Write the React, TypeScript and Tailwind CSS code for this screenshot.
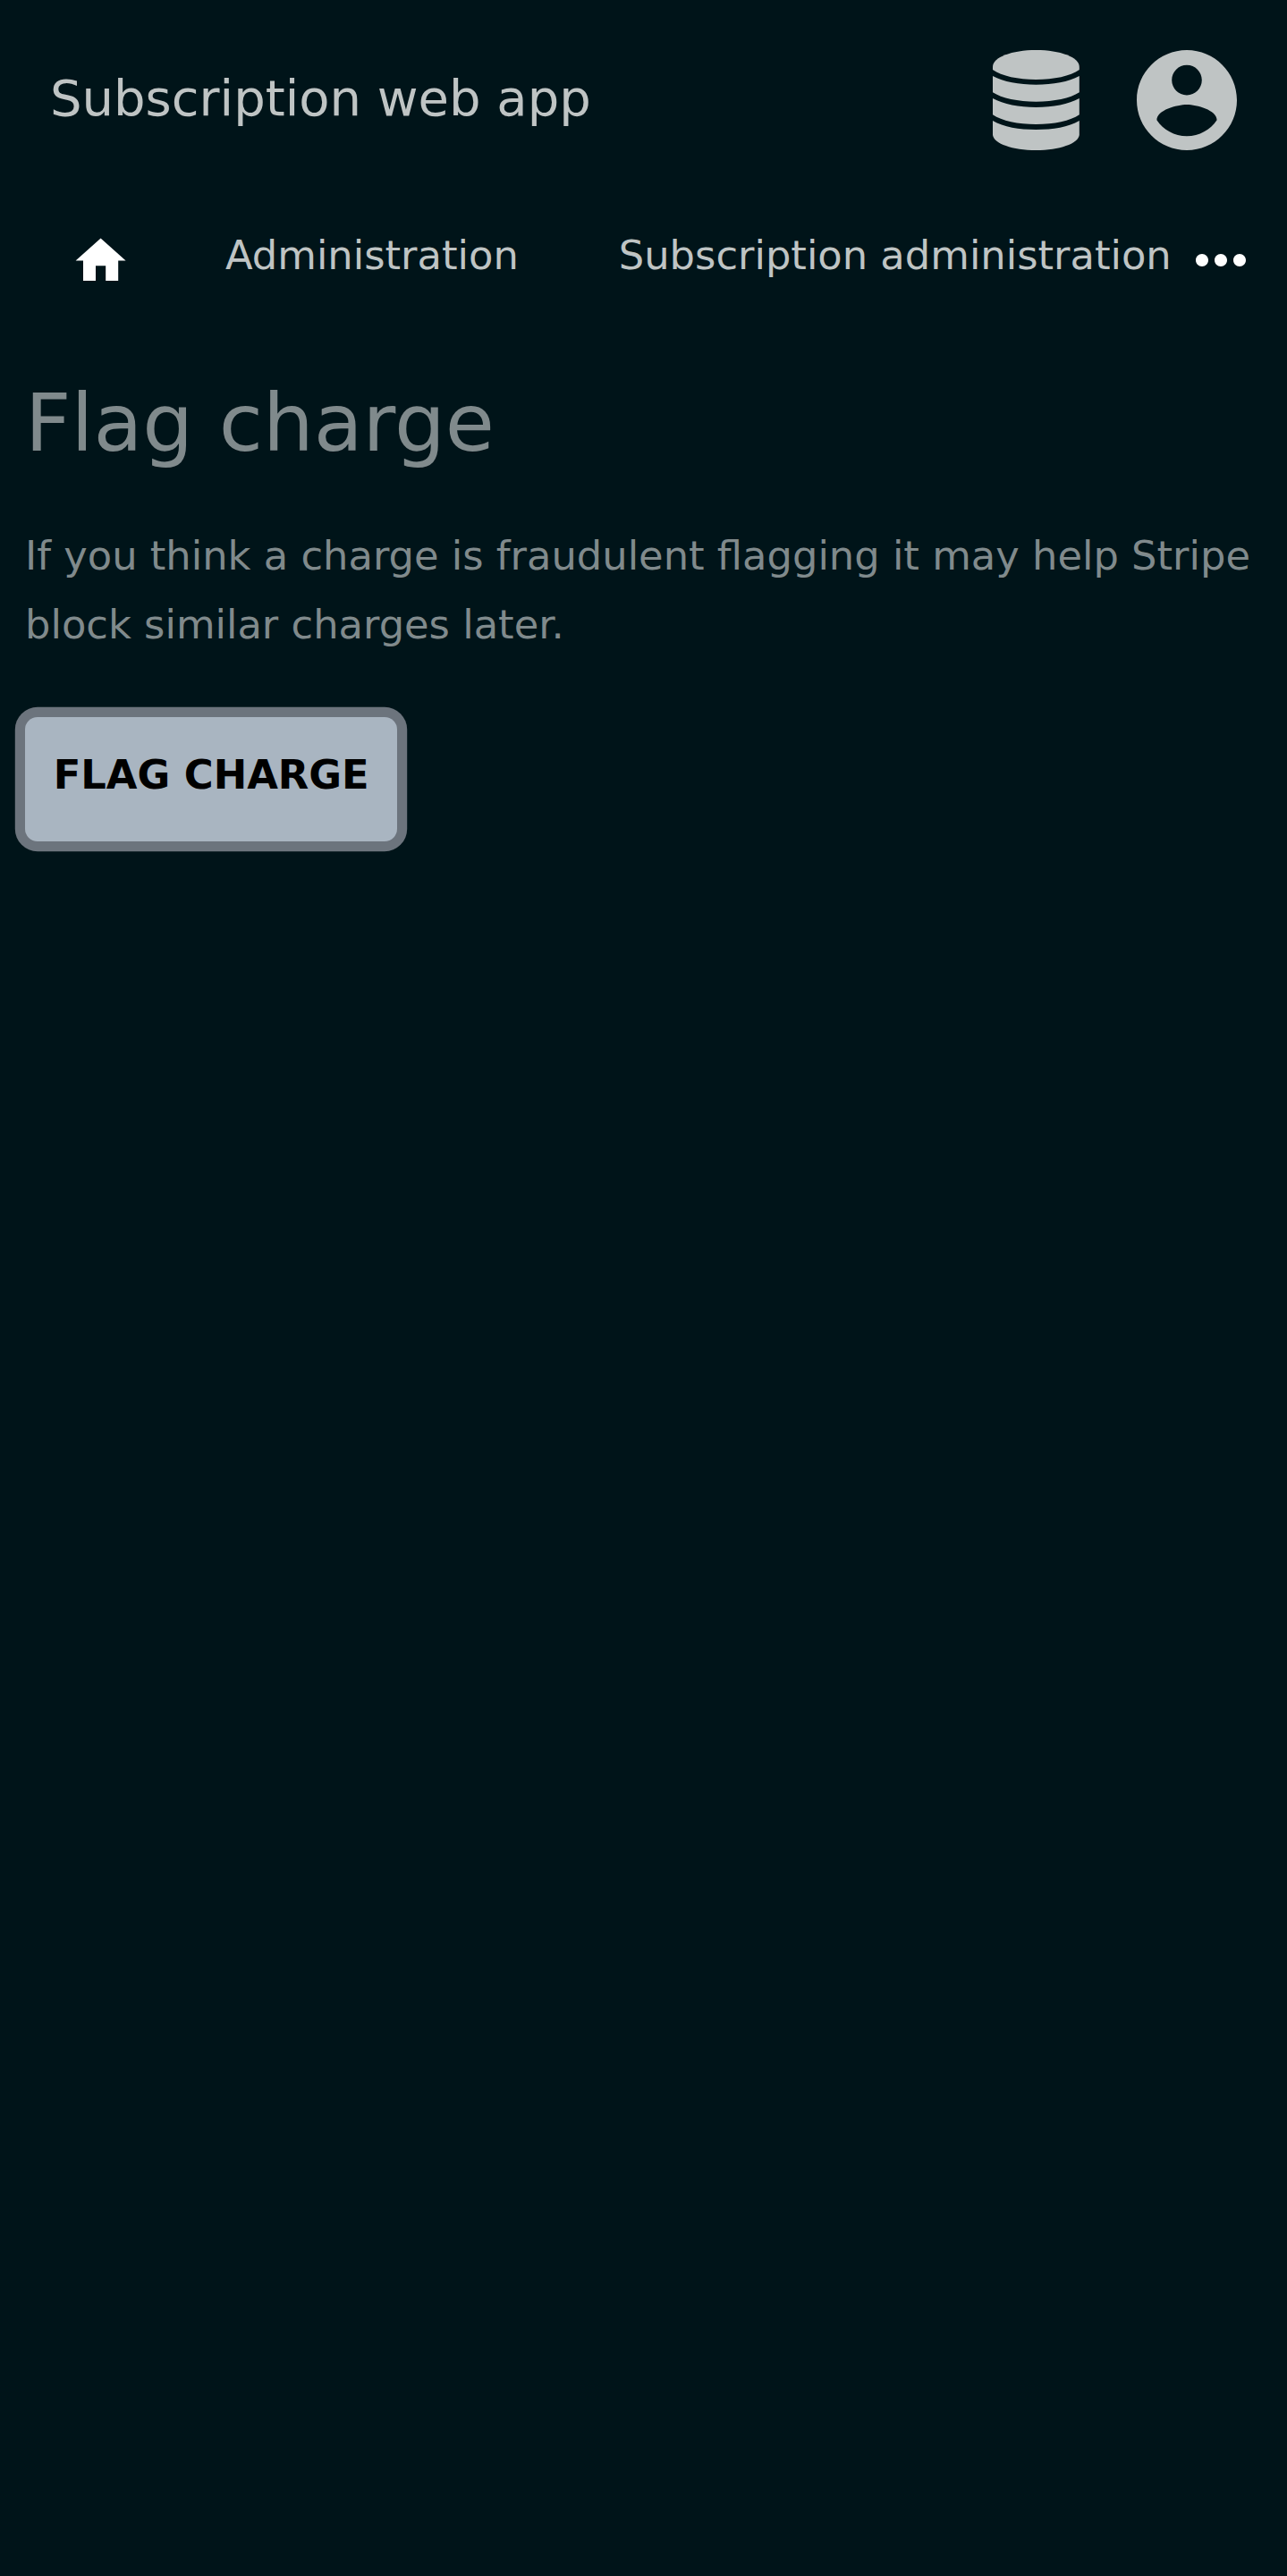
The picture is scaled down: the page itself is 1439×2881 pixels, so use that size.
import { MdHome, MdMoreHoriz } from "react-icons/md";

function DatabaseIcon() {
  return (
    <svg viewBox="0 0 290 336" preserveAspectRatio="none" className="h-[112px] w-[96.8px]" fill="currentColor">
      <path d="M0 56C0 24 64 0 145 0S290 24 290 56V66C260 87 205 99 145 99S30 87 0 66Z" />
      <path d="M0 87C36 107 88 116 145 116S254 107 290 87V142C260 162 205 173 145 173S30 162 0 142Z" />
      <path d="M0 162C36 182 88 192 145 192S254 182 290 162V217C260 238 205 249 145 249S30 238 0 217Z" />
      <path d="M0 237C36 258 88 267 145 267S254 258 290 237V285C286 314 224 336 145 336S4 314 0 285Z" />
    </svg>
  );
}

function AccountIcon() {
  return (
    <svg viewBox="2 2 20 20" className="size-[112px]" fill="currentColor">
      <path d="M12 2C6.48 2 2 6.48 2 12s4.48 10 10 10 10-4.48 10-10S17.52 2 12 2zm0 3c1.66 0 3 1.34 3 3s-1.34 3-3 3-3-1.34-3-3 1.34-3 3-3zm0 14.2c-2.5 0-4.71-1.28-6-3.22.03-1.99 4-3.08 6-3.08 1.99 0 5.97 1.09 6 3.08-1.29 1.94-3.5 3.22-6 3.22z" />
    </svg>
  );
}

export default function App() {
  return (
    <div className="h-[2881px] w-[1439px] overflow-hidden bg-[#001419] font-['DejaVu_Sans',sans-serif]">
      <header className="flex h-[224px] items-start justify-between px-14">
        <h1 className="mt-[67px] text-[56px] leading-[85px] text-[#bfc4c4]">Subscription web app</h1>
        <div className="mt-14 flex items-center gap-[64.4px] text-[#bfc4c4]">
          <DatabaseIcon />
          <AccountIcon />
        </div>
      </header>
      <nav className="flex h-[134px] items-start pl-[79px] text-[44.8px] leading-[79px] text-[#bfc4c4]">
        <MdHome className="mt-[34.4px] size-[67.2px] shrink-0 text-white" />
        <span className="ml-[105.8px] mt-[22px] whitespace-nowrap">Administration</span>
        <span className="ml-[112px] mt-[22px] whitespace-nowrap">Subscription administration</span>
        <MdMoreHoriz className="ml-[13px] mt-[24.6px] size-[84px] shrink-0 text-white" />
      </nav>
      <main className="px-7 text-[#808a8c]">
        <h2 className="pt-[51px] text-[89.6px] leading-[128px]">Flag charge</h2>
        <p className="mt-[46px] text-[44.8px] leading-[77px]">
          If you think a charge is fraudulent flagging it may help Stripe block similar charges later.
        </p>
        <button className="mt-[64.6px] flex h-[139.8px] w-[416.4px] items-start justify-center rounded-[14px] bg-[#a9b5c1] pt-[25.4px] text-[44.8px] leading-[79px] font-bold text-black shadow-[0_0_0_11.2px_#6c747d]">
          FLAG CHARGE
        </button>
      </main>
    </div>
  );
}
